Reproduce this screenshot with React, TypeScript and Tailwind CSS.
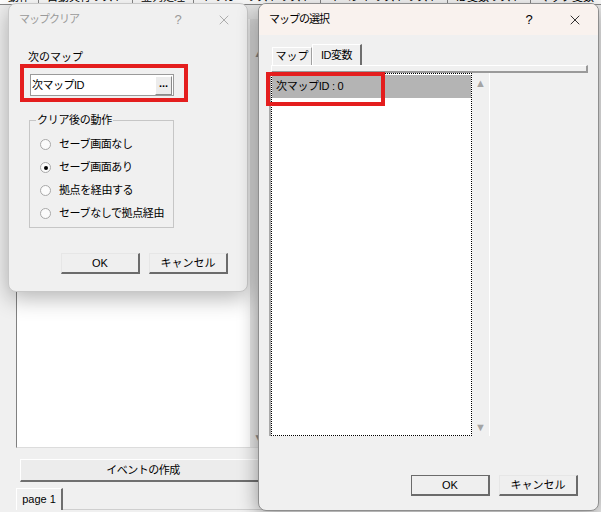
import React from 'react';
import { X } from 'lucide-react';

const FONT = "font-['Liberation_Sans','Noto_Sans_CJK_JP',sans-serif]";

type Opt = { id: string; label: string; checked?: boolean };

const clearOptions: Opt[] = [
  { id: 'nosave', label: 'セーブ画面なし' },
  { id: 'save', label: 'セーブ画面あり', checked: true },
  { id: 'base', label: '拠点を経由する' },
  { id: 'nosave_base', label: 'セーブなしで拠点経由' },
];

const headerCells = ['動作', '自動実行リスト', '並列処理', 'トリガーリストリスト', 'イベントリストリスト', 'ID変数リスト', 'マップ変数'];

const TitleBar = ({ title, active }: { title: string; active: boolean }) => (
  <div className={`flex items-center h-[31px] pl-[10px] shrink-0 ${active ? 'bg-[#f9f2ee] text-black' : 'text-[#9a9a9a]'}`}>
    <span className="flex-1 text-[11px] tracking-[-1px]">{title}</span>
    <span className="w-[46px] text-center text-[13px]">?</span>
    <span className="w-[46px] flex justify-center">
      <X size={16} strokeWidth={1.2} />
    </span>
  </div>
);

const WinButton = ({ label, isDefault }: { label: string; isDefault?: boolean }) => (
  <div
    className={`w-[79px] h-[21px] flex items-center justify-center text-[11px] bg-[#efefef] border ${
      isDefault
        ? 'border-[#6b6b6b] border-r-2 border-b-2'
        : 'border-[#e6e6e6] border-r-[#6b6b6b] border-b-[#6b6b6b] border-r-2 border-b-2'
    }`}
  >
    {label}
  </div>
);

const Radio = ({ checked }: { checked?: boolean }) => (
  <span className="w-[11px] h-[11px] rounded-full border border-[#a8a8a8] bg-[#fbfbfb] flex items-center justify-center">
    {checked && <span className="w-[4px] h-[4px] rounded-full bg-black" />}
  </span>
);

const MapClearDialog = () => (
  <div className="absolute left-[8px] top-[3px] w-[240px] h-[289px] bg-[#f0f0f0] border border-[#c8c8c8] rounded-[8px] shadow-[0_6px_22px_rgba(0,0,0,0.3)] flex flex-col">
    <TitleBar title="マップクリア" active={false} />
    <div className="relative flex flex-col pl-[19px]">
      <span className="mt-[16px] h-[13px] leading-[13px] text-[11px]">次のマップ</span>
      <div className="mt-[10px] ml-[2px] w-[144px] h-[22px] bg-white border border-[#9a9a9a] flex items-center">
        <span className="flex-1 pl-[1px] text-[11px] tracking-[-0.5px]">次マップID</span>
        <span className="w-[17px] h-[19px] mr-[1px] bg-[#ececec] border border-[#fff] border-r-[#8a8a8a] border-b-[#8a8a8a] flex items-center justify-center text-[11px] font-bold leading-none pb-[4px]">
          ...
        </span>
      </div>
      {/* 注釈の赤枠 */}
      <div className="absolute left-[11px] top-[29px] w-[168px] h-[38px] border-[4px] border-[#e41e1e]" />

      <div className="relative mt-[24px] ml-[1px] w-[145px] h-[108px] border border-[#c6c6c6]">
        <span className="absolute left-[6px] -top-[8px] px-[1px] bg-[#f0f0f0] text-[11px] leading-[14px] tracking-[-0.3px]">
          クリア後の動作
        </span>
        <ul className="flex flex-col pt-[12px] pl-[10px]">
          {clearOptions.map((o) => (
            <li key={o.id} className="flex items-center gap-[8px] h-[23px] text-[11px] tracking-[-0.4px]">
              <Radio checked={o.checked} />
              <span>{o.label}</span>
            </li>
          ))}
        </ul>
      </div>

      <div className="mt-[25px] ml-[33px] flex gap-[9px]">
        <WinButton label="OK" />
        <WinButton label="キャンセル" />
      </div>
    </div>
  </div>
);

const MapSelectDialog = () => (
  <div className="absolute left-[258px] top-[3px] w-[341px] h-[508px] bg-[#f0f0f0] border border-[#8e8e8e] rounded-[8px] overflow-hidden shadow-[0_4px_20px_rgba(0,0,0,0.4)] flex flex-col">
    <TitleBar title="マップの選択" active />
    <div className="relative flex flex-col pl-[10px]">
      <div className="flex items-end ml-[3px] mt-[9px]">
        <span className="w-[40px] h-[18px] border border-[#fff] border-r-[#a0a0a0] border-b-0 flex items-center justify-center text-[11px]">
          マップ
        </span>
        <span className="w-[50px] h-[21px] border border-[#fff] border-r-[#6e6e6e] border-r-2 border-b-0 flex items-center justify-center text-[11px] tracking-[-0.5px]">
          ID変数
        </span>
      </div>
      <div className="ml-[2px] w-[317px] h-[8px] border border-[#fff] border-r-[#9a9a9a] border-b-[#9a9a9a] border-r-2 border-b-2" />
      <div className="flex w-[221px] h-[363px] border-l-2 border-[#a8a8a8] bg-white">
        <div className="flex-1 border border-dotted border-black">
          <div className="h-[23px] mt-[1px] bg-[#b4b4b4] flex items-center pl-[4px] text-[11px] tracking-[-0.3px]">
            次マップID : 0
          </div>
        </div>
        <div className="w-[18px] bg-[#f0f0f0] border-r border-white flex flex-col justify-between items-center pt-[5px] pb-[3px] text-[#a4a4a4] text-[11px] leading-none">
          <span>▲</span>
          <span>▼</span>
        </div>
      </div>
      {/* 注釈の赤枠 */}
      <div className="absolute left-[7px] top-[37px] w-[119px] h-[34px] border-[4px] border-[#e41e1e]" />

      <div className="mt-[39px] ml-[142px] flex gap-[9px]">
        <WinButton label="OK" isDefault />
        <WinButton label="キャンセル" />
      </div>
    </div>
  </div>
);

export default function App() {
  return (
    <div className={`relative w-[601px] h-[512px] overflow-hidden bg-[#f0f0f0] text-black ${FONT}`}>
      {/* 背景のエディタ画面 */}
      <div className="flex flex-col h-full">
        <div className="h-[5px] overflow-hidden border-b border-[#8a8a8a] bg-white">
          <div className="flex -mt-[9px] text-[11px] leading-[13px] whitespace-nowrap">
            {headerCells.map((c, i) => (
              <span key={i} className="px-[8px] border-r border-[#8a8a8a]">
                {c}
              </span>
            ))}
          </div>
        </div>
        <div className="flex mt-[14px] ml-[16px] h-[429px]">
          <div className="w-[234px] bg-white border-l border-b border-[#808080] border-b-[#dcdcdc]" />
          <div className="w-[17px] bg-[#e6e6e6] border-b border-[#dcdcdc] flex flex-col justify-between items-center py-[4px] text-[#8a8a8a] text-[10px] leading-none">
            <span className="mt-[26px]">▲</span>
            <span>▼</span>
          </div>
        </div>
        <div className="mt-[11px] ml-[20px] w-[260px] h-[23px] bg-[#ececec] border border-[#fff] border-b-[#707070] border-b-2 flex items-center justify-center text-[11px] tracking-[-0.5px] pr-[14px]">
          イベントの作成
        </div>
        <div className="mt-[6px] ml-[16px] flex items-end">
          <span className="w-[47px] h-[22px] border border-[#fff] border-r-[#6e6e6e] border-r-2 border-b-0 flex items-center justify-center text-[11px]">
            page 1
          </span>
          <span className="w-[210px] border-b border-[#cfcfcf]" />
        </div>
      </div>

      <MapClearDialog />
      <MapSelectDialog />
    </div>
  );
}
